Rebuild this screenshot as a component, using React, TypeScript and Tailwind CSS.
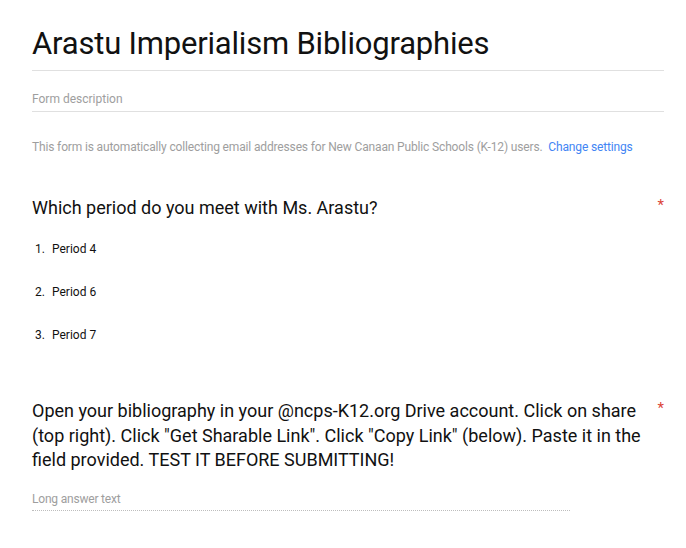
import React from "react";

export default function App() {
  const font = { fontFamily: "Roboto, 'Noto Sans', sans-serif" };
  return (
    <div className="w-[686px] h-[548px] bg-white overflow-hidden" style={font}>
      <div className="pl-[32px] pr-[22px]">
        <div className="pt-[24px] pb-[6px] border-b border-[#e0e0e0]">
          <h1 className="text-[31px] leading-[40px] tracking-[-0.2px] text-[#111111] font-normal">
            Arastu Imperialism Bibliographies
          </h1>
        </div>
        <div className="pt-[19px] pb-[3px] border-b border-[#e0e0e0]">
          <div className="text-[12px] leading-[18px] text-[#9e9e9e]">Form description</div>
        </div>
        <div className="pt-[26px] text-[12px] leading-[18px] tracking-[-0.15px] text-[#9e9e9e] whitespace-nowrap">
          This form is automatically collecting email addresses for New Canaan Public Schools (K-12) users.{" "}
          <span className="text-[#4285f4] ml-[3px]">Change settings</span>
        </div>

        <div className="mt-[40px] flex justify-between items-start">
          <div className="text-[18px] leading-[24px] text-[#111111]">
            Which period do you meet with Ms. Arastu?
          </div>
          <span className="text-[#db4437] text-[15px] leading-[16px] mt-[1px]">*</span>
        </div>
        <div className="mt-[20px] flex flex-col gap-[25px] text-[12px] leading-[18px] text-[#111111]">
          {["Period 4", "Period 6", "Period 7"].map((p, i) => (
            <div key={p} className="flex">
              <span className="w-[20px] pl-[3px]">{i + 1}.</span>
              <span>{p}</span>
            </div>
          ))}
        </div>

        <div className="mt-[55px] flex justify-between items-start">
          <div className="text-[18px] leading-[24.5px] text-[#111111] w-[612px]">
            Open your bibliography in your @ncps-K12.org Drive account. Click on share (top right). Click "Get Sharable Link". Click "Copy Link" (below). Paste it in the field provided. TEST IT BEFORE SUBMITTING!
          </div>
          <span className="text-[#db4437] text-[15px] leading-[16px] mt-[1px]">*</span>
        </div>
        <div className="mt-[18px] w-[538px] border-b border-dotted border-[#bdbdbd] pb-[3px]">
          <div className="text-[12px] leading-[16px] tracking-[-0.2px] text-[#9e9e9e]">Long answer text</div>
        </div>
      </div>
    </div>
  );
}
